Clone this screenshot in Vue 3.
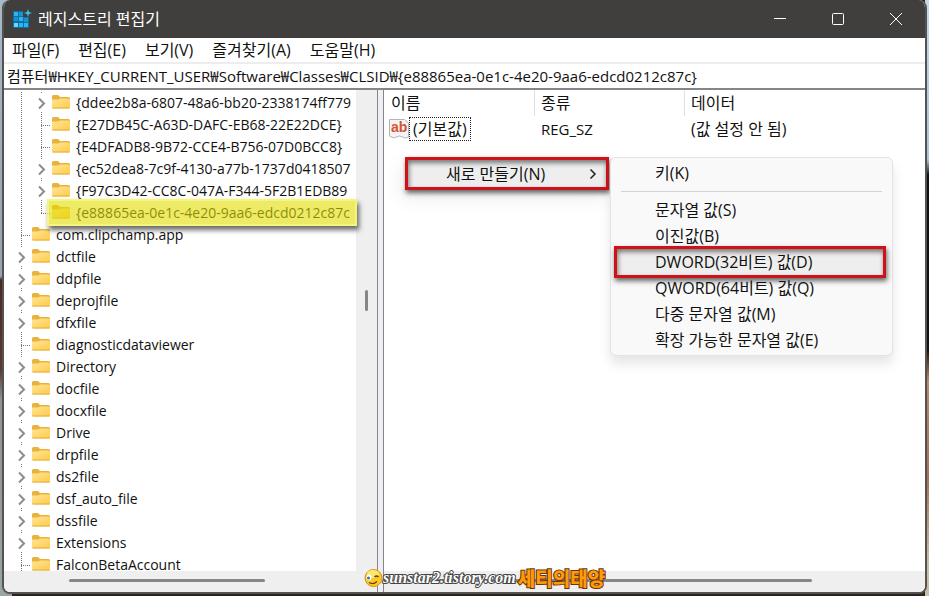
<template>
  <div class="desktop">
    <div class="window">
      <header class="titlebar">
        <svg class="app-icon" width="20" height="20" viewBox="0 0 20 20">
          <path fill="#0c6fa8" d="M1 2h10v6h6v11H1z" />
          <g fill="#2fb4ea">
            <rect x="2" y="3" width="4" height="4" />
            <rect x="7" y="3" width="4" height="4" fill="#1793d1" />
            <rect x="2" y="8" width="4" height="4" fill="#1793d1" />
            <rect x="7" y="8" width="4" height="4" />
            <rect x="12" y="9" width="4" height="4" fill="#1793d1" />
            <rect x="2" y="14" width="4" height="4" fill="#6fd6fb" />
            <rect x="7" y="14" width="4" height="4" />
            <rect x="12" y="14" width="4" height="4" />
          </g>
          <path fill="#3cc0f0" d="M16 0l1 3 3 1-3 1-1 3-1-3-3-1 3-1z" />
        </svg>
        <h1>레지스트리 편집기</h1>
        <div class="controls">
          <button aria-label="최소화"><svg width="12" height="12"><path d="M0 5.5h12" /></svg></button>
          <button aria-label="최대화"><svg width="12" height="12"><rect x=".5" y=".5" width="11" height="11" rx="1" /></svg></button>
          <button aria-label="닫기"><svg width="12" height="12"><path d="M0 0l12 12M12 0L0 12" /></svg></button>
        </div>
      </header>

      <nav class="menubar">
        <button v-for="m in menus" :key="m">{{ m }}</button>
      </nav>

      <input class="address" aria-label="주소" v-model="address" spellcheck="false" />

      <main class="panes">
        <section class="left">
          <div class="tree-wrap">
            <ul class="tree">
              <li v-for="k in keys" :key="k.name">
                <svg v-if="k.level === 2" class="guide" width="20" height="22"><path class="dots" d="M10.5 0v22" /></svg>
                <svg class="guide" width="20" height="22">
                  <template v-if="k.open">
                    <path class="dots" d="M10.5 0v2M10.5 20v2" />
                    <path class="chevron" d="M8 6.500l5 5-5 5" />
                  </template>
                  <template v-else>
                    <path class="dots" :d="k.last ? 'M10.5 0v12' : 'M10.5 0v22'" />
                    <path class="dots" d="M10 11.5h10" />
                  </template>
                </svg>
                <span class="key">
                  <svg class="folder" width="18" height="16" viewBox="0 0 18 16">
                    <defs>
                      <linearGradient id="paper" x2="1" y2="1">
                        <stop offset="0" stop-color="#ffe594" />
                        <stop offset="1" stop-color="#ffcb4d" />
                      </linearGradient>
                    </defs>
                    <path class="tab" d="M0 2.500Q0 1 1.500 1H6l2 2h8.500Q18 3 18 4.500V7H0z" />
                    <path fill="url(#paper)" d="M0 5.500h6.500l1.500-1h8.500Q18 4.500 18 6v7.500q0 1-1 1H1q-1 0-1-1z" />
                    <path class="edge" d="M.5 14h17" />
                  </svg>
                  <span>{{ k.name }}</span>
                </span>
              </li>
            </ul>
            <div class="vbar"><i></i></div>
            <div class="highlight"></div>
          </div>
          <div class="hbar"><i></i></div>
        </section>

        <div class="splitter"></div>

        <section class="right">
          <div class="list">
            <table>
              <thead>
                <tr><th class="col">이름</th><th class="col">종류</th><th>데이터</th></tr>
              </thead>
              <tbody>
                <tr>
                  <td>
                    <div class="value">
                      <svg width="20" height="20" viewBox="0 0 20 20">
                        <path fill="#f4f4f6" stroke="#b4b4ba" d="M.5.500h15l4 3.500v14q-3 2-6 0t-6 0-7-1z" />
                        <text x="2" y="13">ab</text>
                      </svg>
                      <span class="focus">(기본값)</span>
                    </div>
                  </td>
                  <td class="type">REG_SZ</td>
                  <td>(값 설정 안 됨)</td>
                </tr>
              </tbody>
            </table>

            <div class="context">
              <button class="boxed">
                <span>새로 만들기(N)</span>
                <svg width="8" height="12"><path d="M1.500 1.500L6 6l-4.500 4.500" /></svg>
              </button>
            </div>

            <div class="submenu">
              <button>키(K)</button>
              <hr />
              <button v-for="t in types" :key="t" :class="{ boxed: t.startsWith('DWORD') }">{{ t }}</button>
            </div>
          </div>
          <div class="hbar"><i></i></div>
        </section>
      </main>

      <div class="watermark">
        <svg width="20" height="20" viewBox="0 0 20 20">
          <circle cx="10.500" cy="10" r="8.500" fill="#fbc926" stroke="#d8920c" />
          <ellipse cx="10" cy="6" rx="6" ry="4" fill="#fde774" />
          <ellipse cx="6" cy="9.500" rx="2.500" ry="3" fill="#fff" />
          <circle cx="5.500" cy="10" r="1.500" fill="#2d79b8" />
          <path d="M11.500 9q2-2 4 0M6 14.500q4 2.500 8-1" fill="none" stroke="#6b3a08" stroke-width="1.300" />
        </svg>
        <span class="site">sunstar2.tistory.com</span>
        <span class="nick">세티의태양</span>
      </div>
    </div>
  </div>
</template>

<script setup>
import { ref } from 'vue'

const address = ref('컴퓨터₩HKEY_CURRENT_USER₩Software₩Classes₩CLSID₩{e88865ea-0e1c-4e20-9aa6-edcd0212c87c}')

const menus = ['파일(F)', '편집(E)', '보기(V)', '즐겨찾기(A)', '도움말(H)']

const types = [
  '문자열 값(S)',
  '이진값(B)',
  'DWORD(32비트) 값(D)',
  'QWORD(64비트) 값(Q)',
  '다중 문자열 값(M)',
  '확장 가능한 문자열 값(E)',
]

const keys = [
  { name: '{ddee2b8a-6807-48a6-bb20-2338174ff779', level: 2, open: true },
  { name: '{E27DB45C-A63D-DAFC-EB68-22E22DCE}', level: 2 },
  { name: '{E4DFADB8-9B72-CCE4-B756-07D0BCC8}', level: 2 },
  { name: '{ec52dea8-7c9f-4130-a77b-1737d0418507', level: 2, open: true },
  { name: '{F97C3D42-CC8C-047A-F344-5F2B1EDB89', level: 2, open: true },
  { name: '{e88865ea-0e1c-4e20-9aa6-edcd0212c87c', level: 2, last: true },
  { name: 'com.clipchamp.app', level: 1 },
  { name: 'dctfile', level: 1, open: true },
  { name: 'ddpfile', level: 1, open: true },
  { name: 'deprojfile', level: 1, open: true },
  { name: 'dfxfile', level: 1, open: true },
  { name: 'diagnosticdataviewer', level: 1 },
  { name: 'Directory', level: 1, open: true },
  { name: 'docfile', level: 1, open: true },
  { name: 'docxfile', level: 1, open: true },
  { name: 'Drive', level: 1, open: true },
  { name: 'drpfile', level: 1, open: true },
  { name: 'ds2file', level: 1, open: true },
  { name: 'dsf_auto_file', level: 1, open: true },
  { name: 'dssfile', level: 1, open: true },
  { name: 'Extensions', level: 1, open: true },
  { name: 'FalconBetaAccount', level: 1 },
]
</script>

<style>
body {
  margin: 0;
}
</style>

<style scoped>
.desktop {
  box-sizing: border-box;
  height: 100vh;
  padding: 0 2px 2px;
  background:
    linear-gradient(#c3d9e8 0, #a9c4dc 160px, #0d1014 175px, #15120f 350px, #b98a6c 380px, #a87458 480px, #c8c0a4 560px) right / 4px 100% no-repeat,
    linear-gradient(#a9b9c8 0, #97a3ad 276px, #4b2826 280px, #5a3a34 370px, #8d9496 400px, #9aa3a6 100%) left / 12px 100% no-repeat,
    #2a2420;
  font: 15px/22px "Open Sans", "Noto Sans CJK KR", sans-serif;
  color: #111;
}
.window {
  position: relative;
  box-sizing: border-box;
  height: 100%;
  display: flex;
  flex-direction: column;
  border: 2px solid #55534f;
  border-top: 0;
  border-radius: 8px;
  background: #fff;
  overflow: hidden;
}
button {
  border: 0;
  padding: 0;
  background: none;
  font: inherit;
  color: inherit;
  white-space: nowrap;
}

.titlebar {
  flex: none;
  display: flex;
  align-items: center;
  height: 38px;
  padding-left: 8px;
  background: #403f3d;
  color: #fff;
}
.titlebar h1 {
  margin: 0 0 0 6px;
  font-size: 16px;
  font-weight: 400;
}
.controls {
  display: flex;
  margin-left: auto;
}
.controls button {
  display: flex;
  align-items: center;
  justify-content: center;
  width: 58px;
  height: 38px;
}
.controls path,
.controls rect {
  fill: none;
  stroke: #fff;
}

.menubar {
  flex: none;
  display: flex;
  gap: 19px;
  height: 24px;
  padding-left: 8px;
  font-size: 16px;
}
.address {
  flex: none;
  box-sizing: border-box;
  height: 28px;
  padding: 0 3px 2px;
  border: solid;
  border-width: 2px 0;
  border-color: #ededed transparent #87858a;
  background: #fff;
  font: inherit;
  color: inherit;
  outline: none;
}

.panes {
  flex: 1;
  min-height: 0;
  display: flex;
}
.left {
  flex: none;
  width: 373px;
  display: flex;
  flex-direction: column;
}
.tree-wrap {
  position: relative;
  flex: 1;
  min-height: 0;
  display: flex;
}
.tree {
  flex: 1;
  min-width: 0;
  margin: 0;
  padding: 2px 0 0 7px;
  font-size: 14px;
  list-style: none;
  overflow: hidden;
}
.tree li {
  display: flex;
  height: 22px;
}
.guide {
  flex: none;
}
.dots {
  fill: none;
  stroke: #777;
  stroke-dasharray: 1 1;
}
.chevron {
  fill: none;
  stroke: #8c8c8c;
  stroke-width: 2;
}
.key {
  flex: 1;
  min-width: 0;
  display: flex;
  gap: 6px;
  padding-left: 1px;
  white-space: nowrap;
}
.folder {
  flex: none;
  margin-top: 2px;
}
.tab {
  fill: #e8b23c;
}
.edge {
  stroke: #e3ad3c;
}
.highlight {
  position: absolute;
  top: 109px;
  left: 43px;
  right: 20px;
  height: 27px;
  background: rgba(225, 220, 0, 0.6);
  box-shadow: inset 0 0 0 2px rgba(255, 255, 150, 0.5), 2px 4px 5px rgba(0, 0, 0, 0.6);
}
.vbar {
  flex: none;
  width: 21px;
  display: flex;
  align-items: center;
  justify-content: center;
  background: #efefef;
}
.vbar i {
  width: 3px;
  height: 21px;
  margin-bottom: 60px;
  border-radius: 2px;
  background: #868686;
}
.hbar {
  flex: none;
  display: flex;
  align-items: center;
  height: 21px;
  background: #efefef;
}
.hbar i {
  height: 3px;
  margin-bottom: 2px;
  border-radius: 2px;
  background: #868686;
}
.left .hbar i {
  width: 196px;
  margin-left: 65px;
}
.splitter {
  flex: none;
  width: 5px;
  border: solid #87858a;
  border-width: 0 1px;
  background: #f0f0f2;
}

.right {
  flex: 1;
  min-width: 0;
  display: flex;
  flex-direction: column;
}
.right .hbar i {
  flex: 1;
  margin-right: 113px;
  margin-left: 12px;
}
.list {
  position: relative;
  flex: 1;
  min-height: 0;
  font-size: 16px;
}
table {
  width: 100%;
  table-layout: fixed;
  border-collapse: collapse;
}
th,
td {
  height: 26px;
  padding: 0 0 0 7px;
  text-align: left;
  font-weight: 400;
}
.col {
  width: 143px;
}
th + th {
  box-shadow: inset 1px 0 #e0e0e0;
}
.type {
  font-size: 15px;
}
.value {
  display: flex;
  align-items: center;
  gap: 1px;
  margin-left: -2px;
}
.value text {
  font: 700 14px "Liberation Sans", sans-serif;
  fill: #d4532c;
}
.focus {
  padding: 0 3px;
  outline: 1px dotted #222;
}

.context {
  position: absolute;
  top: 67px;
  left: 17px;
  width: 208px;
  border-radius: 6px;
  box-shadow: 0 8px 20px rgba(0, 0, 0, 0.08);
}
.boxed {
  border: 3px solid #cf1219;
  background: #eee;
  box-shadow: 1px 3px 5px rgba(0, 0, 0, 0.6), inset 1px 3px 5px rgba(0, 0, 0, 0.5);
}
.context .boxed {
  display: flex;
  align-items: center;
  justify-content: space-between;
  width: 204px;
  height: 33px;
  margin-left: 4px;
  padding: 0 9px 0 38px;
}
.context path {
  fill: none;
  stroke: #222;
  stroke-width: 1.500;
}
.submenu {
  position: absolute;
  top: 67px;
  left: 226px;
  box-sizing: border-box;
  width: 283px;
  padding: 2px 3px;
  border: 1px solid #e3e3e3;
  border-radius: 6px;
  background: #f9f9f9;
  box-shadow: 0 8px 12px rgba(0, 0, 0, 0.1);
}
.submenu button {
  display: block;
  box-sizing: border-box;
  width: 272px;
  height: 26px;
  padding-left: 41px;
  text-align: left;
}
.submenu .boxed {
  height: 32px;
  margin: -3px 0;
  padding-left: 38px;
}
.submenu hr {
  height: 1px;
  margin: 5px 7px;
  border: 0;
  background: #d3d3d3;
}

.watermark {
  position: absolute;
  left: 359px;
  bottom: 4px;
  display: flex;
  align-items: center;
  white-space: nowrap;
}
.site {
  font: italic 700 16px/20px "Liberation Serif", serif;
  color: #fff;
  -webkit-text-stroke: 2px #444;
  paint-order: stroke fill;
}
.nick {
  margin-left: 2px;
  font: 900 19px/20px "Noto Sans CJK KR", sans-serif;
  color: #ff9a0c;
  -webkit-text-stroke: 2px #6b3406;
  paint-order: stroke fill;
}
</style>
